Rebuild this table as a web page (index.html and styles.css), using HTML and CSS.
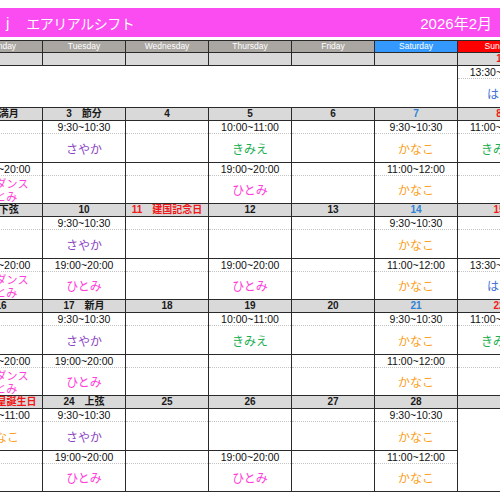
FILE: index.html
```html
<!DOCTYPE html>
<html lang="ja">
<head>
<meta charset="utf-8">
<title>エアリアルシフト 2026年2月</title>
<link rel="stylesheet" href="styles.css">
</head>
<body>
<div class="page">
  <header class="titlebar">
    <div class="title-left"><span class="mark">j</span><span class="name">エアリアルシフト</span></div>
    <div class="title-right">2026年2月</div>
  </header>

  <div class="cal">
    <div class="hd">Monday</div>
    <div class="hd">Tuesday</div>
    <div class="hd">Wednesday</div>
    <div class="hd">Thursday</div>
    <div class="hd">Friday</div>
    <div class="hd sat">Saturday</div>
    <div class="hd sun">Sunday</div>

    <!-- week 1 -->
    <div class="dt"></div><div class="dt"></div><div class="dt"></div><div class="dt"></div><div class="dt"></div><div class="dt"></div>
    <div class="dt red">1</div>
    <div class="blank span6"></div>
    <div class="slot"><div class="tm">13:30~14:30</div><div class="nm c-blue">はな</div></div>

    <!-- week 2 -->
    <div class="dt">2　満月</div>
    <div class="dt">3　節分</div>
    <div class="dt">4</div>
    <div class="dt">5</div>
    <div class="dt">6</div>
    <div class="dt blue">7</div>
    <div class="dt red">8</div>

    <div class="slot"><div class="tm"></div><div class="nm"></div></div>
    <div class="slot"><div class="tm">9:30~10:30</div><div class="nm c-purple">さやか</div></div>
    <div class="slot"><div class="tm"></div><div class="nm"></div></div>
    <div class="slot"><div class="tm">10:00~11:00</div><div class="nm c-green">きみえ</div></div>
    <div class="slot"><div class="tm"></div><div class="nm"></div></div>
    <div class="slot"><div class="tm">9:30~10:30</div><div class="nm c-orange">かなこ</div></div>
    <div class="slot"><div class="tm">11:00~12:00</div><div class="nm c-green">きみえ</div></div>

    <div class="slot"><div class="tm">19:00~20:00</div><div class="nm two c-pink"><span class="ln">フラダンス</span><span class="ln">ひとみ</span></div></div>
    <div class="slot"><div class="tm"></div><div class="nm"></div></div>
    <div class="slot"><div class="tm"></div><div class="nm"></div></div>
    <div class="slot"><div class="tm">19:00~20:00</div><div class="nm c-pink">ひとみ</div></div>
    <div class="slot"><div class="tm"></div><div class="nm"></div></div>
    <div class="slot"><div class="tm">11:00~12:00</div><div class="nm c-orange">かなこ</div></div>
    <div class="slot"><div class="tm"></div><div class="nm"></div></div>

    <!-- week 3 -->
    <div class="dt">9　下弦</div>
    <div class="dt">10</div>
    <div class="dt red">11　建国記念日</div>
    <div class="dt">12</div>
    <div class="dt">13</div>
    <div class="dt blue">14</div>
    <div class="dt red">15</div>

    <div class="slot"><div class="tm"></div><div class="nm"></div></div>
    <div class="slot"><div class="tm">9:30~10:30</div><div class="nm c-purple">さやか</div></div>
    <div class="slot"><div class="tm"></div><div class="nm"></div></div>
    <div class="slot"><div class="tm"></div><div class="nm"></div></div>
    <div class="slot"><div class="tm"></div><div class="nm"></div></div>
    <div class="slot"><div class="tm">9:30~10:30</div><div class="nm c-orange">かなこ</div></div>
    <div class="slot"><div class="tm"></div><div class="nm"></div></div>

    <div class="slot"><div class="tm">19:00~20:00</div><div class="nm two c-pink"><span class="ln">フラダンス</span><span class="ln">ひとみ</span></div></div>
    <div class="slot"><div class="tm">19:00~20:00</div><div class="nm c-pink">ひとみ</div></div>
    <div class="slot"><div class="tm"></div><div class="nm"></div></div>
    <div class="slot"><div class="tm">19:00~20:00</div><div class="nm c-pink">ひとみ</div></div>
    <div class="slot"><div class="tm"></div><div class="nm"></div></div>
    <div class="slot"><div class="tm">11:00~12:00</div><div class="nm c-orange">かなこ</div></div>
    <div class="slot"><div class="tm">13:30~14:30</div><div class="nm c-blue">はな</div></div>

    <!-- week 4 -->
    <div class="dt">16</div>
    <div class="dt">17　新月</div>
    <div class="dt">18</div>
    <div class="dt">19</div>
    <div class="dt">20</div>
    <div class="dt blue">21</div>
    <div class="dt red">22</div>

    <div class="slot"><div class="tm"></div><div class="nm"></div></div>
    <div class="slot"><div class="tm">9:30~10:30</div><div class="nm c-purple">さやか</div></div>
    <div class="slot"><div class="tm"></div><div class="nm"></div></div>
    <div class="slot"><div class="tm">10:00~11:00</div><div class="nm c-green">きみえ</div></div>
    <div class="slot"><div class="tm"></div><div class="nm"></div></div>
    <div class="slot"><div class="tm">9:30~10:30</div><div class="nm c-orange">かなこ</div></div>
    <div class="slot"><div class="tm">11:00~12:00</div><div class="nm c-green">きみえ</div></div>

    <div class="slot"><div class="tm">19:00~20:00</div><div class="nm two c-pink"><span class="ln">フラダンス</span><span class="ln">ひとみ</span></div></div>
    <div class="slot"><div class="tm">19:00~20:00</div><div class="nm c-pink">ひとみ</div></div>
    <div class="slot"><div class="tm"></div><div class="nm"></div></div>
    <div class="slot"><div class="tm"></div><div class="nm"></div></div>
    <div class="slot"><div class="tm"></div><div class="nm"></div></div>
    <div class="slot"><div class="tm">11:00~12:00</div><div class="nm c-orange">かなこ</div></div>
    <div class="slot"><div class="tm"></div><div class="nm"></div></div>

    <!-- week 5 -->
    <div class="dt red">23　天皇誕生日</div>
    <div class="dt">24　上弦</div>
    <div class="dt">25</div>
    <div class="dt">26</div>
    <div class="dt">27</div>
    <div class="dt">28</div>
    <div class="dt"></div>

    <div class="slot"><div class="tm">10:00~11:00</div><div class="nm c-orange">かなこ</div></div>
    <div class="slot"><div class="tm">9:30~10:30</div><div class="nm c-purple">さやか</div></div>
    <div class="slot"><div class="tm"></div><div class="nm"></div></div>
    <div class="slot"><div class="tm"></div><div class="nm"></div></div>
    <div class="slot"><div class="tm"></div><div class="nm"></div></div>
    <div class="slot"><div class="tm">9:30~10:30</div><div class="nm c-orange">かなこ</div></div>
    <div class="blank span-rows"></div>

    <div class="slot"><div class="tm"></div><div class="nm"></div></div>
    <div class="slot"><div class="tm">19:00~20:00</div><div class="nm c-pink">ひとみ</div></div>
    <div class="slot"><div class="tm"></div><div class="nm"></div></div>
    <div class="slot"><div class="tm">19:00~20:00</div><div class="nm c-pink">ひとみ</div></div>
    <div class="slot"><div class="tm"></div><div class="nm"></div></div>
    <div class="slot"><div class="tm">11:00~12:00</div><div class="nm c-orange">かなこ</div></div>
  </div>
</div>
</body>
</html>
```

FILE: styles.css
```css
html, body {
  margin: 0;
  padding: 0;
  background: #ffffff;
  overflow: hidden;
}

body {
  font-family: "Liberation Sans", Arial, "Noto Sans CJK JP", sans-serif;
  color: #111;
}

.page {
  width: 582px;
  margin-left: -41px;
  padding-top: 8px;
}

.titlebar {
  height: 29px;
  background: #fa4cf0;
  color: #ffffff;
  display: flex;
  align-items: center;
  justify-content: space-between;
  padding: 0 49px 0 47px;
  margin-bottom: 3px;
}

.title-left {
  display: flex;
  align-items: center;
  font-size: 14px;
}

.title-left .mark {
  font-size: 15px;
}

.title-left .name {
  margin-left: 17px;
  font-family: "Noto Sans CJK JP", sans-serif;
  letter-spacing: -0.5px;
}

.title-right {
  font-size: 15px;
}

.cal {
  display: grid;
  grid-template-columns: repeat(7, 82px);
  grid-template-rows: 11px 12px 41px repeat(4, 12px 41px 40px);
  gap: 1px;
  background: #2a2a2a;
  border: 1px solid #2a2a2a;
}

.hd {
  background: #aaa6a2;
  color: #ffffff;
  font-size: 8.5px;
  line-height: 11px;
  text-align: center;
}

.hd.sat { background: #3399ff; }
.hd.sun { background: #ff0000; }

.dt {
  background: #d9d9d9;
  font-size: 10px;
  font-weight: bold;
  line-height: 12px;
  text-align: center;
  color: #1a1a1a;
  white-space: nowrap;
}

.dt.red { color: #f01818; }
.dt.blue { color: #2e82d6; }

.slot {
  background: #ffffff;
  display: flex;
  flex-direction: column;
}

.tm {
  height: 12px;
  flex: none;
  border-bottom: 1px dotted #c4c4c4;
  font-size: 10.5px;
  line-height: 12px;
  text-align: center;
  color: #111;
  white-space: nowrap;
}

.nm {
  flex: 1;
  display: flex;
  align-items: center;
  justify-content: center;
  font-family: "Noto Sans CJK JP", sans-serif;
  font-size: 12px;
  line-height: 13px;
  text-align: center;
  white-space: nowrap;
}

.nm.two {
  flex-direction: column;
  font-size: 11px;
}

.nm.two .ln {
  display: block;
  height: 13px;
  line-height: 13px;
}

.blank {
  background: #ffffff;
}

.span6 { grid-column: span 6; }
.span-rows { grid-row: span 2; }

.c-purple { color: #8a44c4; }
.c-green { color: #20ae50; }
.c-pink { color: #ff3ed8; }
.c-orange { color: #fb9f22; }
.c-blue { color: #3f72d8; }
```
